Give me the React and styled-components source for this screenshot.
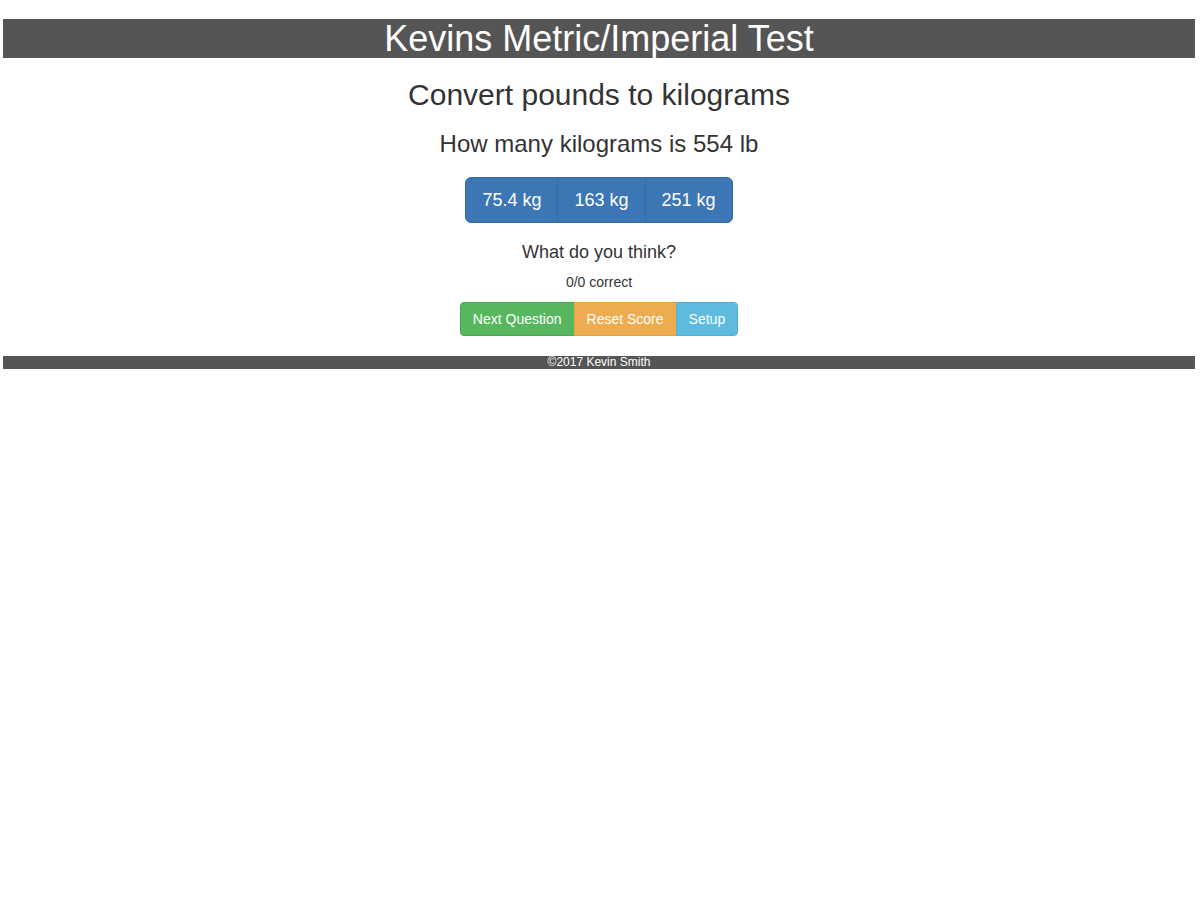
import React, { useState } from "react";
import styled, { createGlobalStyle } from "styled-components";

const GlobalStyle = createGlobalStyle`
  *, *::before, *::after { box-sizing: border-box; }
  body {
    margin: 0;
    background: #fff;
    color: #333;
    font-family: "Helvetica Neue", "Liberation Sans", Arial, sans-serif;
    font-size: 14px;
    line-height: 20px;
  }
`;

const Page = styled.div`
  display: flex;
  flex-direction: column;
  padding: 19px 5px 20px 3px;
  text-align: center;
`;

const Title = styled.h1`
  margin: 0;
  background: #555;
  color: #fff;
  font-size: 36px;
  font-weight: 500;
  line-height: 39px;
`;

const Topic = styled.h2`
  margin: 20px 0 0;
  font-size: 30px;
  font-weight: 500;
  line-height: 33px;
`;

const Question = styled.h3`
  margin: 20px 0;
  font-size: 24px;
  font-weight: 500;
  line-height: 26px;
`;

const ButtonGroup = styled.div`
  display: flex;
  justify-content: center;
`;

const tones = {
  primary: ["#3d76b5", "#366ba5"],
  success: ["#57b75e", "#4aa950"],
  warning: ["#eeac50", "#eba23c"],
  info: ["#5ebbdd", "#49b4d8"],
};

const Button = styled.button`
  margin: 0;
  padding: ${(p) => (p.$large ? "10px 16px" : "6px 12px")};
  border: 1px solid ${(p) => tones[p.$tone][1]};
  background: ${(p) => tones[p.$tone][0]};
  color: #fff;
  font-family: inherit;
  font-size: ${(p) => (p.$large ? "18px" : "14px")};
  line-height: ${(p) => (p.$large ? "24px" : "20px")};
  white-space: nowrap;
  cursor: pointer;

  & + & { margin-left: -1px; }
  &:first-child { border-radius: ${(p) => (p.$large ? "6px 0 0 6px" : "4px 0 0 4px")}; }
  &:last-child { border-radius: ${(p) => (p.$large ? "0 6px 6px 0" : "0 4px 4px 0")}; }
`;

const Feedback = styled.h4`
  margin: 19px 0 10px;
  font-size: 18px;
  font-weight: 500;
  line-height: 20px;
`;

const Score = styled.p`
  margin: 0 0 10px;
`;

const Footer = styled.footer`
  margin-top: 20px;
  background: #555;
  color: #fff;
  font-size: 12px;
  line-height: 13px;
`;

const answers = ["75.4 kg", "163 kg", "251 kg"];
const correctAnswer = "251 kg";

export default function App() {
  const [score, setScore] = useState({ right: 0, total: 0 });
  const [feedback, setFeedback] = useState("What do you think?");

  const choose = (answer) => {
    const right = answer === correctAnswer;
    setScore((s) => ({ right: s.right + (right ? 1 : 0), total: s.total + 1 }));
    setFeedback(right ? "Correct!" : "Try again");
  };

  return (
    <>
      <GlobalStyle />
      <Page>
        <Title>Kevins Metric/Imperial Test</Title>
        <main>
          <Topic>Convert pounds to kilograms</Topic>
          <Question>How many kilograms is 554 lb</Question>
          <ButtonGroup role="group" aria-label="Answers">
            {answers.map((answer) => (
              <Button key={answer} type="button" $tone="primary" $large onClick={() => choose(answer)}>
                {answer}
              </Button>
            ))}
          </ButtonGroup>
          <Feedback>{feedback}</Feedback>
          <Score>{`${score.right}/${score.total} correct`}</Score>
          <ButtonGroup role="group" aria-label="Quiz controls">
            <Button type="button" $tone="success" onClick={() => setFeedback("What do you think?")}>
              Next Question
            </Button>
            <Button type="button" $tone="warning" onClick={() => setScore({ right: 0, total: 0 })}>
              Reset Score
            </Button>
            <Button type="button" $tone="info">Setup</Button>
          </ButtonGroup>
        </main>
        <Footer>©2017 Kevin Smith</Footer>
      </Page>
    </>
  );
}
